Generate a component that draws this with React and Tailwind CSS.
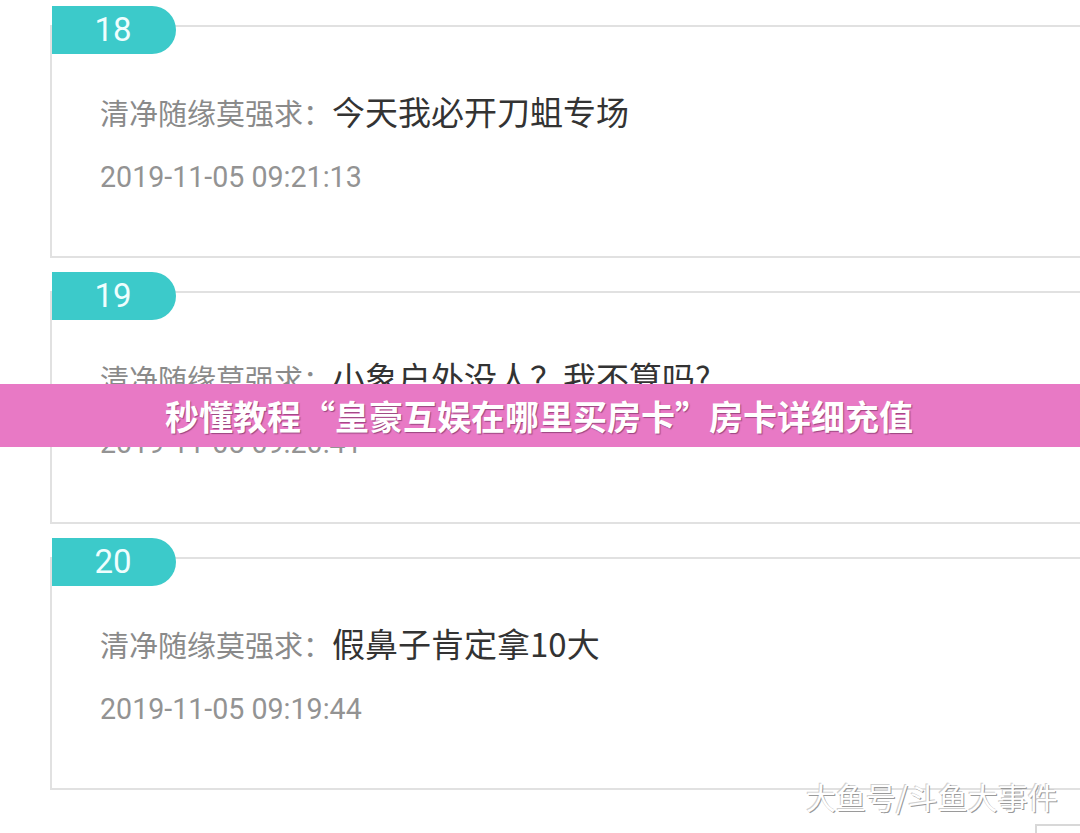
import React from "react";

const items = [
  { n: "18", text: "今天我必开刀蛆专场", time: "2019-11-05 09:21:13" },
  { n: "19", text: "小象户外没人？我不算吗?", time: "2019-11-05 09:20:41" },
  { n: "20", text: "假鼻子肯定拿10大", time: "2019-11-05 09:19:44" },
];

const cjk = { fontFamily: '"Noto Sans CJK SC", "Noto Sans", sans-serif' };
const rob = { fontFamily: 'Roboto, "Noto Sans CJK SC", sans-serif' };

export default function App() {
  return (
    <div className="relative w-[1080px] h-[833px] overflow-hidden bg-white">
      <div className="flex flex-col gap-[33px] pt-[25px]">
        {items.map((it) => (
          <div
            key={it.n}
            className="relative ml-[50px] h-[233px] border-l-2 border-t-2 border-b-2 border-[#e1e1e1] bg-white flex flex-col pl-[48px] pt-[64px]"
          >
            <div
              className="absolute left-0 top-[-21px] w-[124px] h-[48px] bg-[#3ccaca] rounded-r-[24px] flex items-center justify-center pr-[2px] text-[33px] text-[#effefe]"
              style={rob}
            >
              {it.n}
            </div>
            <div className="flex items-baseline whitespace-nowrap leading-[40px] h-[40px]">
              <span className="text-[29px] text-[#8a8a8a]" style={cjk}>清净随缘莫强求：</span>
              <span className="text-[33px] text-[#333333]" style={cjk}>{it.text}</span>
            </div>
            <div className="mt-[29px] text-[28.6px] leading-[34px] text-[#939393] whitespace-nowrap" style={rob}>
              {it.time}
            </div>
          </div>
        ))}
      </div>

      <div className="absolute left-0 top-[384px] w-full h-[63px] bg-[#e879c5] flex items-center pl-[165px]">
        <span
          className="text-[34px] font-bold text-white leading-none whitespace-nowrap"
          style={{ ...cjk, textShadow: "1px 1px 1px rgba(90,30,70,0.55)" }}
        >
          秒懂教程“皇豪互娱在哪里买房卡”房卡详细充值
        </span>
      </div>

      <div
        className="absolute left-[806px] top-[781px] text-[30px] text-white leading-none whitespace-nowrap"
        style={{ ...cjk, textShadow: "1px 1px 0 #9a9a9a, -1px -1px 0 #d0d0d0" }}
      >
        大鱼号/斗鱼大事件
      </div>

      <div className="absolute left-[1035px] top-[824px] w-[60px] h-[20px] border-l-2 border-t-2 border-[#d8d8d8]" />
    </div>
  );
}
